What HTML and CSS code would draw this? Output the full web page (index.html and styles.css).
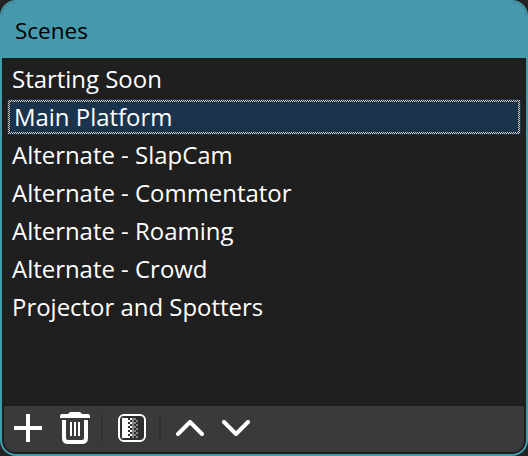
FILE: index.html
```html
<!DOCTYPE html>
<html lang="en">
<head>
<meta charset="utf-8">
<title>Scenes</title>
<link rel="stylesheet" href="styles.css">
</head>
<body>
<section class="dock">
  <header class="dock-title">Scenes</header>
  <ul class="scene-list">
    <li class="scene">Starting Soon</li>
    <li class="scene selected"><div class="focus"><div class="label">Main Platform</div></div></li>
    <li class="scene">Alternate - SlapCam</li>
    <li class="scene">Alternate - Commentator</li>
    <li class="scene">Alternate - Roaming</li>
    <li class="scene">Alternate - Crowd</li>
    <li class="scene">Projector and Spotters</li>
  </ul>
  <footer class="toolbar">
    <svg class="icon add" width="28" height="28" viewBox="0 0 28 28"><path d="M14 0v28M0 14h28" stroke="#fefefe" stroke-width="4"/></svg>
    <svg class="icon trash" width="30" height="32" viewBox="0 0 30 32" fill="none" stroke="#fefefe"><path d="M0 6V4Q0 2 2 2H8Q9 0 11 0h8q2 0 3 2h6Q30 2 30 4V6z" fill="#fefefe" stroke="none"/><path d="M4 8v18q0 4 4 4h14q4 0 4-4V8" stroke-width="4"/><path d="M11 10v14M15 10v14M19 10v14" stroke-width="2"/></svg>
    <span class="separator"></span>
    <svg class="icon filter" width="28" height="28" viewBox="0 0 28 28">
      <defs>
        <pattern id="light" width="4" height="4" patternUnits="userSpaceOnUse"><path d="M0 0h2v2H0zM2 2h2v2H2z" fill="#fefefe"/></pattern>
        <pattern id="dark" width="4" height="4" patternUnits="userSpaceOnUse"><path d="M0 0h2v2H0zM2 2h2v2H2z" fill="#858585"/></pattern>
      </defs>
      <rect x="1" y="1" width="26" height="26" rx="5" fill="#2e2e2e" stroke="#fefefe" stroke-width="2"/>
      <path d="M4 4h6v20H4z" fill="#fefefe"/>
      <path d="M14 4h2v20h-2z" fill="#858585"/>
      <path d="M10 4h4v20h-4z" fill="url(#light)"/>
      <path d="M16 4h4v20h-4z" fill="url(#dark)"/>
    </svg>
    <span class="separator"></span>
    <svg class="icon up" width="28" height="16" viewBox="0 0 28 16"><path d="M2 14 14 2l12 12" class="chevron"/></svg>
    <svg class="icon down" width="28" height="16" viewBox="0 0 28 16"><path d="M2 2l12 12L26 2" class="chevron"/></svg>
  </footer>
</section>
</body>
</html>
```
FILE: styles.css
```css
* { box-sizing: border-box; }
body { margin: 0; background: #222; font-family: "Open Sans", "Noto Sans", sans-serif; }
.dock {
  display: flex;
  flex-direction: column;
  width: 528px;
  height: 456px;
  border: 2px solid #469aac;
  border-radius: 16px;
  background: #1f1f1f;
  overflow: hidden;
}
.dock-title {
  height: 56px;
  padding: 0 13px;
  background: #469aac;
  color: #000;
  font-size: 22.5px;
  line-height: 57px;
}
.scene-list {
  flex: 1;
  margin: 0;
  padding: 3px 5px 0;
  list-style: none;
  color: #fff;
  font-size: 23.95px;
}
.scene { height: 38px; padding: 0 5px; line-height: 38px; white-space: nowrap; }
.scene:first-child { line-height: 36px; }
.selected {
  height: 36px;
  margin: 0 0 1px;
  padding: 1px;
  border-radius: 3px;
  background: #1b344e;
}
.focus {
  height: 34px;
  padding: 2px;
  background: repeating-conic-gradient(#e4cbb1 0 25%, #1b344e 0 50%) 0 0 / 2px 2px;
}
.label { height: 30px; padding-left: 4px; background: #1b344e; line-height: 30px; }
.toolbar {
  display: flex;
  align-items: center;
  height: 46px;
  margin: 0 2px 2px;
  padding: 0 0 2px 10px;
  border-radius: 0 0 12px 12px;
  background: #3a3a3a;
}
.icon { flex: none; display: block; }
.trash { margin-left: 18px; }
.separator { width: 2px; height: 30px; margin-left: 11px; background: #323232; }
.filter { margin-left: 15px; }
.filter + .separator { margin-left: 13px; }
.up { margin-left: 15px; }
.down { margin-left: 18px; }
.chevron { fill: none; stroke: #fefefe; stroke-width: 4; stroke-linecap: round; stroke-linejoin: round; }
```
